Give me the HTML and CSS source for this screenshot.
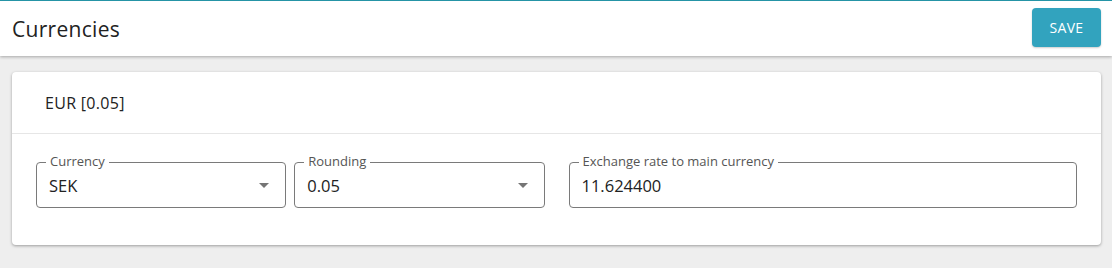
FILE: index.html
```html
<!DOCTYPE html>
<html lang="en">

<head>
    <meta charset="UTF-8">
    <meta name="viewport" content="width=device-width, initial-scale=1.0">
    <title>Currencies</title>
    <link rel="stylesheet" href="styles.css">
</head>

<body>
    <div class="topbar">
        <h1 class="pageTitle">Currencies</h1>
        <button class="saveButton">SAVE</button>
    </div>
    <div class="content">
        <div class="card">
            <div class="cardHead">EUR [0.05]</div>
            <div class="cardBody">
                <div class="pair">
                    <div class="field">
                        <span class="fieldLabel">Currency</span>
                        <span class="fieldValue">SEK</span>
                        <span class="caret"></span>
                    </div>
                    <div class="field">
                        <span class="fieldLabel">Rounding</span>
                        <span class="fieldValue">0.05</span>
                        <span class="caret"></span>
                    </div>
                </div>
                <div class="field">
                    <span class="fieldLabel">Exchange rate to main currency</span>
                    <span class="fieldValue">11.624400</span>
                </div>
            </div>
        </div>
    </div>
</body>

</html>
```

FILE: styles.css
```css
html,
body {
    height: 100%;
}

body {
    margin: 0;
    padding: 0;
    background: #eeeeee;
    font-family: "Open Sans", "Noto Sans", sans-serif;
    color: #222222;
}

.topbar {
    display: flex;
    justify-content: space-between;
    align-items: center;
    height: 56px;
    padding: 0 11px 0 12px;
    box-sizing: border-box;
    background: #ffffff;
    border-top: 1px solid #2594a6;
    box-shadow: 0 1px 3px rgba(0, 0, 0, 0.3);
}

.pageTitle {
    margin: 0;
    font-size: 21px;
    font-weight: 500;
    letter-spacing: 0.3px;
    color: #222222;
}

.saveButton {
    height: 39px;
    width: 69px;
    margin-top: -2px;
    border: none;
    border-radius: 4px;
    background: #32a3be;
    color: #ffffff;
    font-family: inherit;
    font-size: 14px;
    letter-spacing: 0.3px;
    box-shadow: 0 1px 2px rgba(0, 0, 0, 0.2);
}

.content {
    padding: 16px 11px 0 12px;
}

.card {
    background: #ffffff;
    border-radius: 4px;
    box-shadow: 0 1px 3px rgba(0, 0, 0, 0.35);
}

.cardHead {
    height: 61px;
    padding-left: 33px;
    display: flex;
    align-items: center;
    font-size: 16px;
    font-weight: 500;
    letter-spacing: 0.3px;
    border-bottom: 1px solid #e6e6e6;
}

.cardBody {
    display: grid;
    grid-template-columns: 1fr 1fr;
    gap: 24px;
    padding: 28px 24px 37px 24px;
}

.pair {
    display: grid;
    grid-template-columns: 1fr 1fr;
    gap: 8px;
}

.field {
    position: relative;
    height: 46px;
    display: flex;
    align-items: center;
    padding: 0 12px;
    border: 1px solid #7a7a7a;
    border-radius: 4px;
    box-sizing: border-box;
}

.fieldLabel {
    position: absolute;
    top: -9px;
    left: 9px;
    padding: 0 4px;
    background: #ffffff;
    font-size: 13px;
    line-height: 15px;
    color: #555555;
}

.fieldValue {
    flex: 1;
    font-size: 16.5px;
    color: #222222;
}

.caret {
    width: 0;
    height: 0;
    margin-right: 4px;
    border-left: 5px solid transparent;
    border-right: 5px solid transparent;
    border-top: 5px solid #757575;
}
```
